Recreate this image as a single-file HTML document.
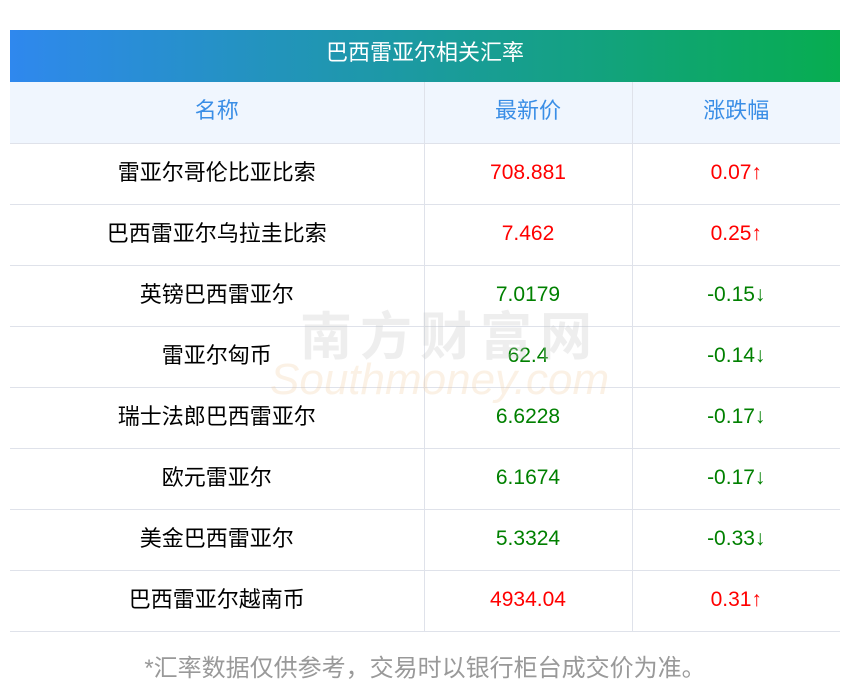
<!DOCTYPE html>
<html><head><meta charset="utf-8"><style>
body{margin:0;background:#fff;width:850px;height:697px;font-family:"Liberation Sans","Noto Sans CJK SC",sans-serif;position:relative;overflow:hidden}
.bar{position:absolute;left:10px;top:30px;width:830px;height:52px;background:linear-gradient(90deg,#2f88ee,#07ad50);color:#fff;font-size:22px;text-align:center;line-height:46px}
table{position:absolute;left:10px;top:82px;width:830px;border-collapse:collapse;font-size:22px}
td{border:1px solid #dfe2ea;height:61px;text-align:center;padding:0 0 6px 0;box-sizing:border-box}
td.n{font-size:21px;padding:0 0 2px 0}
tr td:first-child{border-left:none}
tr td:last-child{border-right:none}
tr:first-child td{border-top:none;background:#f0f6fe;color:#3a8ee6}
.r{color:#f00}.g{color:#008000}
.foot{position:absolute;top:648px;left:0;width:850px;text-align:center;color:#999;font-size:24px}
.wm{position:absolute;left:300px;top:295px;font-size:52px;color:rgba(200,200,200,.3);font-weight:bold;letter-spacing:8px}
.wm2{position:absolute;left:270px;top:355px;font-size:44px;color:rgba(240,200,150,.25);font-style:italic}
</style></head><body>
<div class="bar">巴西雷亚尔相关汇率</div>
<table>
<tr><td style="width:414px">名称</td><td style="width:208px">最新价</td><td>涨跌幅</td></tr>
<tr><td>雷亚尔哥伦比亚比索</td><td class="n r">708.881</td><td class="n r">0.07↑</td></tr>
<tr><td>巴西雷亚尔乌拉圭比索</td><td class="n r">7.462</td><td class="n r">0.25↑</td></tr>
<tr><td>英镑巴西雷亚尔</td><td class="n g">7.0179</td><td class="n g">-0.15↓</td></tr>
<tr><td>雷亚尔匈币</td><td class="n g">62.4</td><td class="n g">-0.14↓</td></tr>
<tr><td>瑞士法郎巴西雷亚尔</td><td class="n g">6.6228</td><td class="n g">-0.17↓</td></tr>
<tr><td>欧元雷亚尔</td><td class="n g">6.1674</td><td class="n g">-0.17↓</td></tr>
<tr><td>美金巴西雷亚尔</td><td class="n g">5.3324</td><td class="n g">-0.33↓</td></tr>
<tr><td>巴西雷亚尔越南币</td><td class="n r">4934.04</td><td class="n r">0.31↑</td></tr>
</table>
<div class="wm">南方财富网</div>
<div class="wm2">Southmoney.com</div>
<div class="foot">*汇率数据仅供参考，交易时以银行柜台成交价为准。</div>
</body></html>
